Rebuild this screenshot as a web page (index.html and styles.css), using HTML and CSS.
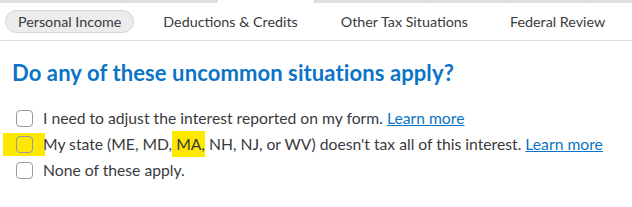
FILE: index.html
```html
<!DOCTYPE html>
<html lang="en">

<head>
    <meta charset="UTF-8">
    <meta name="viewport" content="width=device-width, initial-scale=1.0">
    <title>Interest</title>
    <link rel="stylesheet" href="styles.css">
</head>

<body>
    <div class="top_strip">
        <div class="seg seg_a"></div>
        <div class="seg seg_b"></div>
        <div class="seg_gap"></div>
        <div class="seg seg_c"></div>
        <div class="seg seg_d"></div>
        <div class="seg seg_e"></div>
        <div class="seg seg_f"></div>
    </div>

    <nav class="tabs">
        <span class="tab active">Personal Income</span>
        <span class="tab tab_2">Deductions &amp; Credits</span>
        <span class="tab tab_3">Other Tax Situations</span>
        <span class="tab tab_4">Federal Review</span>
    </nav>

    <div class="content">
        <h1>Do any of these uncommon situations apply?</h1>

        <div class="options">
            <label class="option">
                <span class="box"></span>
                <span>I need to adjust the interest reported on my form. <a href="#">Learn more</a></span>
            </label>
            <label class="option">
                <span class="mark"><span class="box"></span></span>
                <span>My state (ME, MD,<span class="hl"> MA,</span> NH, NJ, or WV) doesn't tax all of this interest. <a href="#">Learn more</a></span>
            </label>
            <label class="option">
                <span class="box"></span>
                <span>None of these apply.</span>
            </label>
        </div>
    </div>
</body>

</html>
```

FILE: styles.css
```css
* {
    margin: 0;
    padding: 0;
    box-sizing: border-box;
}

body {
    font-family: Lato, "Open Sans", sans-serif;
    background: white;
    color: #393a3d;
}

.top_strip {
    height: 3px;
    display: flex;
}

.seg {
    background: #e0e0e0;
    border-right: 1px solid #cfcfcf;
}

.seg_a { width: 126px; }
.seg_b { width: 92px; border-right: none; }
.seg_gap { width: 96px; }
.seg_c { width: 113px; border-left: 1px solid #cfcfcf; }
.seg_d { width: 80px; }
.seg_e { width: 80px; }
.seg_f { flex: 1; border-right: none; }

.tabs {
    height: 38px;
    border-bottom: 1px solid #dcdcdc;
    display: flex;
    align-items: center;
    padding-left: 5px;
    font-size: 14.3px;
    color: #393a3d;
}

.tab {
    white-space: nowrap;
}

.active {
    background: #ececec;
    border: 1px solid #d6d6d6;
    border-radius: 12px;
    padding: 2px 12px 3px 12px;
    height: 23px;
}

.tab_2 { margin-left: 29px; }
.tab_3 { margin-left: 43px; }
.tab_4 { margin-left: 42px; }

.content {
    padding: 18px 12px 0 12px;
}

h1 {
    font-size: 22px;
    font-weight: 700;
    color: #0b74c7;
    letter-spacing: 0.1px;
}

.options {
    margin-top: 23px;
    display: flex;
    flex-direction: column;
    gap: 8px;
}

.option {
    display: flex;
    align-items: center;
    gap: 10px;
    font-size: 15.7px;
    height: 18px;
    padding-left: 4px;
    white-space: nowrap;
}

.box {
    display: block;
    width: 17px;
    height: 17px;
    border: 1px solid #979a9f;
    border-radius: 4px;
    background: transparent;
}

.mark {
    display: block;
    background: #ffe800;
    margin: -3px -12px -3px -13px;
    padding: 3px 12px 3px 13px;
}

.hl {
    background: #ffe800;
    padding: 4px 0 4px 0;
}

a {
    color: #0b74c7;
}
```
